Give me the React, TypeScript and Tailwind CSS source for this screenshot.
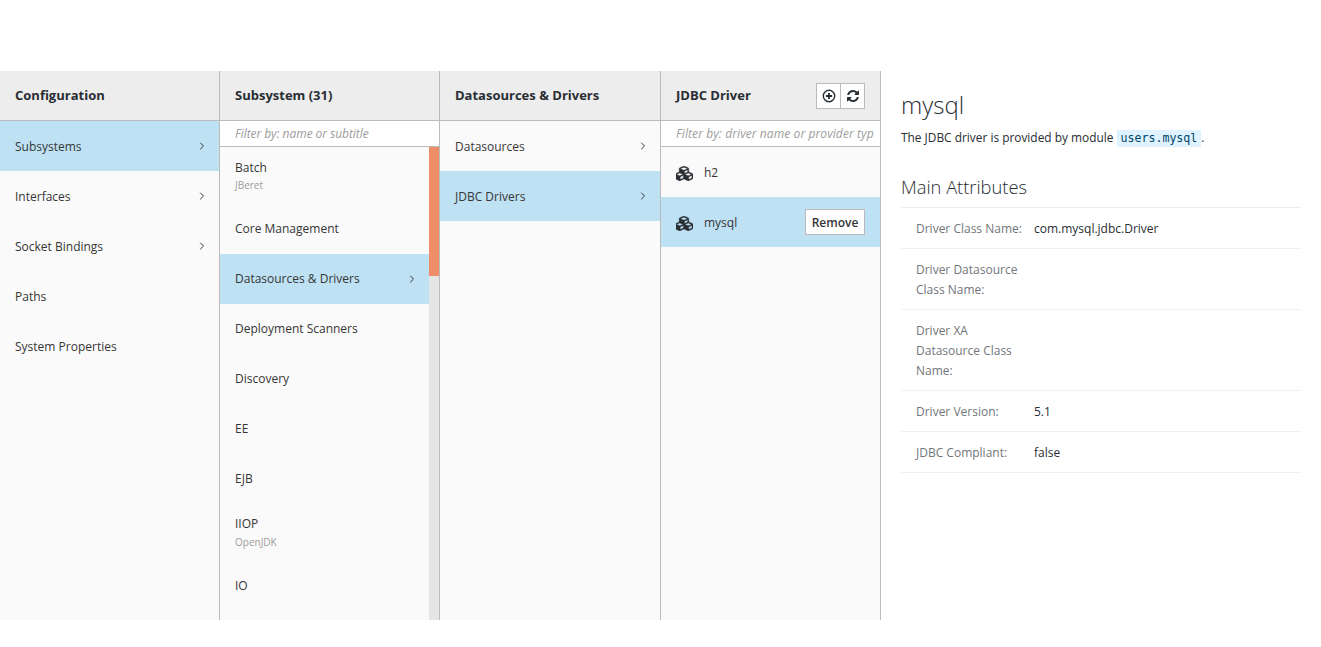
import { ChevronRight } from "lucide-react"

interface Item {
  title: string
  subtitle?: string
  next?: boolean
  selected?: boolean
  nudge?: boolean
}

const configItems: Item[] = [
  { title: "Subsystems", next: true, selected: true, nudge: true },
  { title: "Interfaces", next: true, nudge: true },
  { title: "Socket Bindings", next: true, nudge: true },
  { title: "Paths", nudge: true },
  { title: "System Properties", nudge: true },
]

const subsystemItems: Item[] = [
  { title: "Batch", subtitle: "JBeret", nudge: true },
  { title: "Core Management" },
  { title: "Datasources & Drivers", next: true, selected: true },
  { title: "Deployment Scanners" },
  { title: "Discovery" },
  { title: "EE" },
  { title: "EJB" },
  { title: "IIOP", subtitle: "OpenJDK" },
  { title: "IO" },
]

const datasourceItems: Item[] = [
  { title: "Datasources", next: true, nudge: true },
  { title: "JDBC Drivers", next: true, selected: true, nudge: true },
]

const attributes = [
  { label: "Driver Class Name:", value: "com.mysql.jdbc.Driver" },
  { label: "Driver Datasource Class Name:", value: "" },
  { label: "Driver XA Datasource Class Name:", value: "" },
  { label: "Driver Version:", value: "5.1" },
  { label: "JDBC Compliant:", value: "false" },
]

function ColumnHeader({ title, children }: { title: string; children?: React.ReactNode }) {
  return (
    <div className="h-[50px] flex items-center justify-between pl-[15px] pr-[15px] bg-[#ededed] border-b border-[#bbbbbb] shrink-0">
      <h2 className="text-[13px] font-bold text-[#292e34]">{title}</h2>
      {children}
    </div>
  )
}

function FilterBox({ placeholder, wide }: { placeholder: string; wide?: boolean }) {
  return (
    <div className="h-[26px] flex items-center pl-[15px] pr-[6px] bg-white border-b border-[#bbbbbb] shrink-0">
      <span className={`text-[12px] italic text-[#9c9c9c] overflow-hidden whitespace-nowrap ${wide ? "tracking-[0.09px]" : "tracking-[-0.05px]"}`}>
        {placeholder}
      </span>
    </div>
  )
}

function Row({ item }: { item: Item }) {
  return (
    <div
      className={`${item.subtitle ? "h-[57px] pt-[10px]" : "h-[50px] items-center"} flex justify-between pl-[15px] pr-[11px] text-[#363636] ${
        item.selected ? "bg-[#bee1f4]" : ""
      }`}
    >
      <div className={item.nudge && !item.subtitle ? "pt-[2px]" : ""}>
        <div className={`text-[12px] leading-[20px] ${item.nudge && item.subtitle ? "mt-[1px]" : ""}`}>{item.title}</div>
        {item.subtitle && (
          <div className={`${item.nudge ? "" : "mt-[1px]"} text-[10px] leading-[15px] text-[#9c9c9c]`}>{item.subtitle}</div>
        )}
      </div>
      {item.next && <ChevronRight className="w-[12px] h-[12px] text-[#363636]" strokeWidth={2} />}
    </div>
  )
}

function CubesIcon() {
  return (
    <svg
      viewBox="0 0 2048 1792"
      className="w-[17px] h-[15px] mt-[2px] mr-[11px] text-[#292e34]"
      fill="currentColor"
      stroke="currentColor"
      strokeWidth="50"
    >
      <path d="M512 1632l384-192v-314l-384 164v342zm-64-454l404-173-404-173-404 173zm1088 454l384-192v-314l-384 164v342zm-64-454l404-173-404-173-404 173zm-448-293l384-165v-266l-384 164v267zm-64-379l441-189-441-189-441 189zm1088 518v416q0 36-19 67t-52 47l-448 224q-25 14-57 14t-57-14l-448-224q-4-2-7-4-2 2-7 4l-448 224q-25 14-57 14t-57-14l-448-224q-33-16-52-47t-19-67v-416q0-38 21.500-70t56.500-48l434-186v-400q0-38 21.500-70t56.500-48l448-192q23-10 50-10t50 10l448 192q35 16 56.500 48t21.500 70v400l434 186q36 16 57 48t21 70z" />
    </svg>
  )
}

function DriverRow({ name, selected }: { name: string; selected?: boolean }) {
  return (
    <div className={`h-[50px] flex items-center pl-[15px] pr-[15px] text-[#363636] ${selected ? "bg-[#bee1f4]" : ""}`}>
      <CubesIcon />
      <span className="text-[12px] flex-1 pt-[2px]">{name}</span>
      {selected && (
        <button className="h-[26px] w-[60px] pt-[2px] bg-white border border-[#bbbbbb] text-[12px] font-semibold text-[#363636]">
          Remove
        </button>
      )}
    </div>
  )
}

export default function App() {
  return (
    <div className="pt-[71px] h-[647px] bg-white font-['Open_Sans',sans-serif]">
      <div className="flex h-[549px]">
        <section className="w-[220px] flex flex-col bg-[#fafafa] border-r border-[#bbbbbb]">
          <ColumnHeader title="Configuration" />
          {configItems.map((item) => (
            <Row key={item.title} item={item} />
          ))}
        </section>

        <section className="w-[220px] flex flex-col bg-[#fafafa] border-r border-[#bbbbbb] overflow-hidden">
          <ColumnHeader title="Subsystem (31)" />
          <FilterBox placeholder="Filter by: name or subtitle" />
          <div className="flex flex-1 min-h-0">
            <div className="flex-1 overflow-hidden">
              {subsystemItems.map((item) => (
                <Row key={item.title} item={item} />
              ))}
            </div>
            <div className="w-[10px] bg-[#e5e5e5]">
              <div className="h-[129px] bg-[#ee8d68]" />
            </div>
          </div>
        </section>

        <section className="w-[221px] flex flex-col bg-[#fafafa] border-r border-[#bbbbbb]">
          <ColumnHeader title="Datasources & Drivers" />
          {datasourceItems.map((item) => (
            <Row key={item.title} item={item} />
          ))}
        </section>

        <section className="w-[220px] flex flex-col bg-[#fafafa] border-r border-[#bbbbbb]">
          <ColumnHeader title="JDBC Driver">
            <div className="flex h-[26px] bg-white border border-[#bbbbbb] text-[#292e34]">
              <div className="w-[24px] flex items-center justify-center border-r border-[#bbbbbb]">
                <svg viewBox="0 0 14 14" className="w-[14px] h-[14px]" fill="none" stroke="currentColor">
                  <circle cx="7" cy="7" r="5.7" strokeWidth="1.4" />
                  <path d="M7 3.9v6.2M3.9 7h6.2" strokeWidth="1.8" />
                </svg>
              </div>
              <div className="w-[23px] flex items-center justify-center">
                <svg viewBox="0 0 1792 1792" className="w-[14px] h-[14px]" fill="currentColor">
                  <path d="M1639 1056q0 5-1 7-64 268-268 434.500t-478 166.500q-146 0-282.500-55t-243.500-157l-129 129q-19 19-45 19t-45-19-19-45v-448q0-26 19-45t45-19h448q26 0 45 19t19 45-19 45l-137 137q71 66 161 102t187 36q134 0 250-65t186-179q11-17 53-117 8-23 30-23h192q13 0 22.500 9.500t9.500 22.500zm25-800v448q0 26-19 45t-45 19h-448q-26 0-45-19t-19-45 19-45l138-138q-148-137-349-137-134 0-250 65t-186 179q-11 17-53 117-8 23-30 23h-199q-13 0-22.500-9.500t-9.500-22.500v-7q65-268 270-434.500t480-166.500q146 0 284 55.500t245 156.500l130-129q19-19 45-19t45 19 19 45z" />
                </svg>
              </div>
            </div>
          </ColumnHeader>
          <FilterBox placeholder="Filter by: driver name or provider type" wide />
          <DriverRow name="h2" />
          <DriverRow name="mysql" selected />
        </section>

        <main className="flex-1 px-5 text-[#292e34]">
          <h1 className="mt-[18px] text-[24px] leading-[32px] font-light">mysql</h1>
          <p className="mt-[6px] text-[11.9px] leading-[20px]">
            The JDBC driver is provided by module{" "}
            <code className="inline-block h-[17px] px-[4px] bg-[#def3ff] text-[#004368] font-['DejaVu_Sans_Mono',monospace] text-[11.6px] leading-[17px]">
              users.mysql
            </code>
            .
          </p>
          <h2 className="mt-[27px] pb-[7px] text-[18.3px] leading-[26px] font-light border-b border-[#ececec]">
            Main Attributes
          </h2>
          <dl>
            {attributes.map((attr) => (
              <div key={attr.label} className="flex pt-[11px] pb-[9px] border-b border-[#f1f1f1] text-[12px] leading-[20px]">
                <dt className="w-[133px] pl-[15px] text-[#72767b] shrink-0">
                  <span className="block w-[110px]">{attr.label}</span>
                </dt>
                <dd className="ml-0">{attr.value}</dd>
              </div>
            ))}
          </dl>
        </main>
      </div>
    </div>
  )
}
